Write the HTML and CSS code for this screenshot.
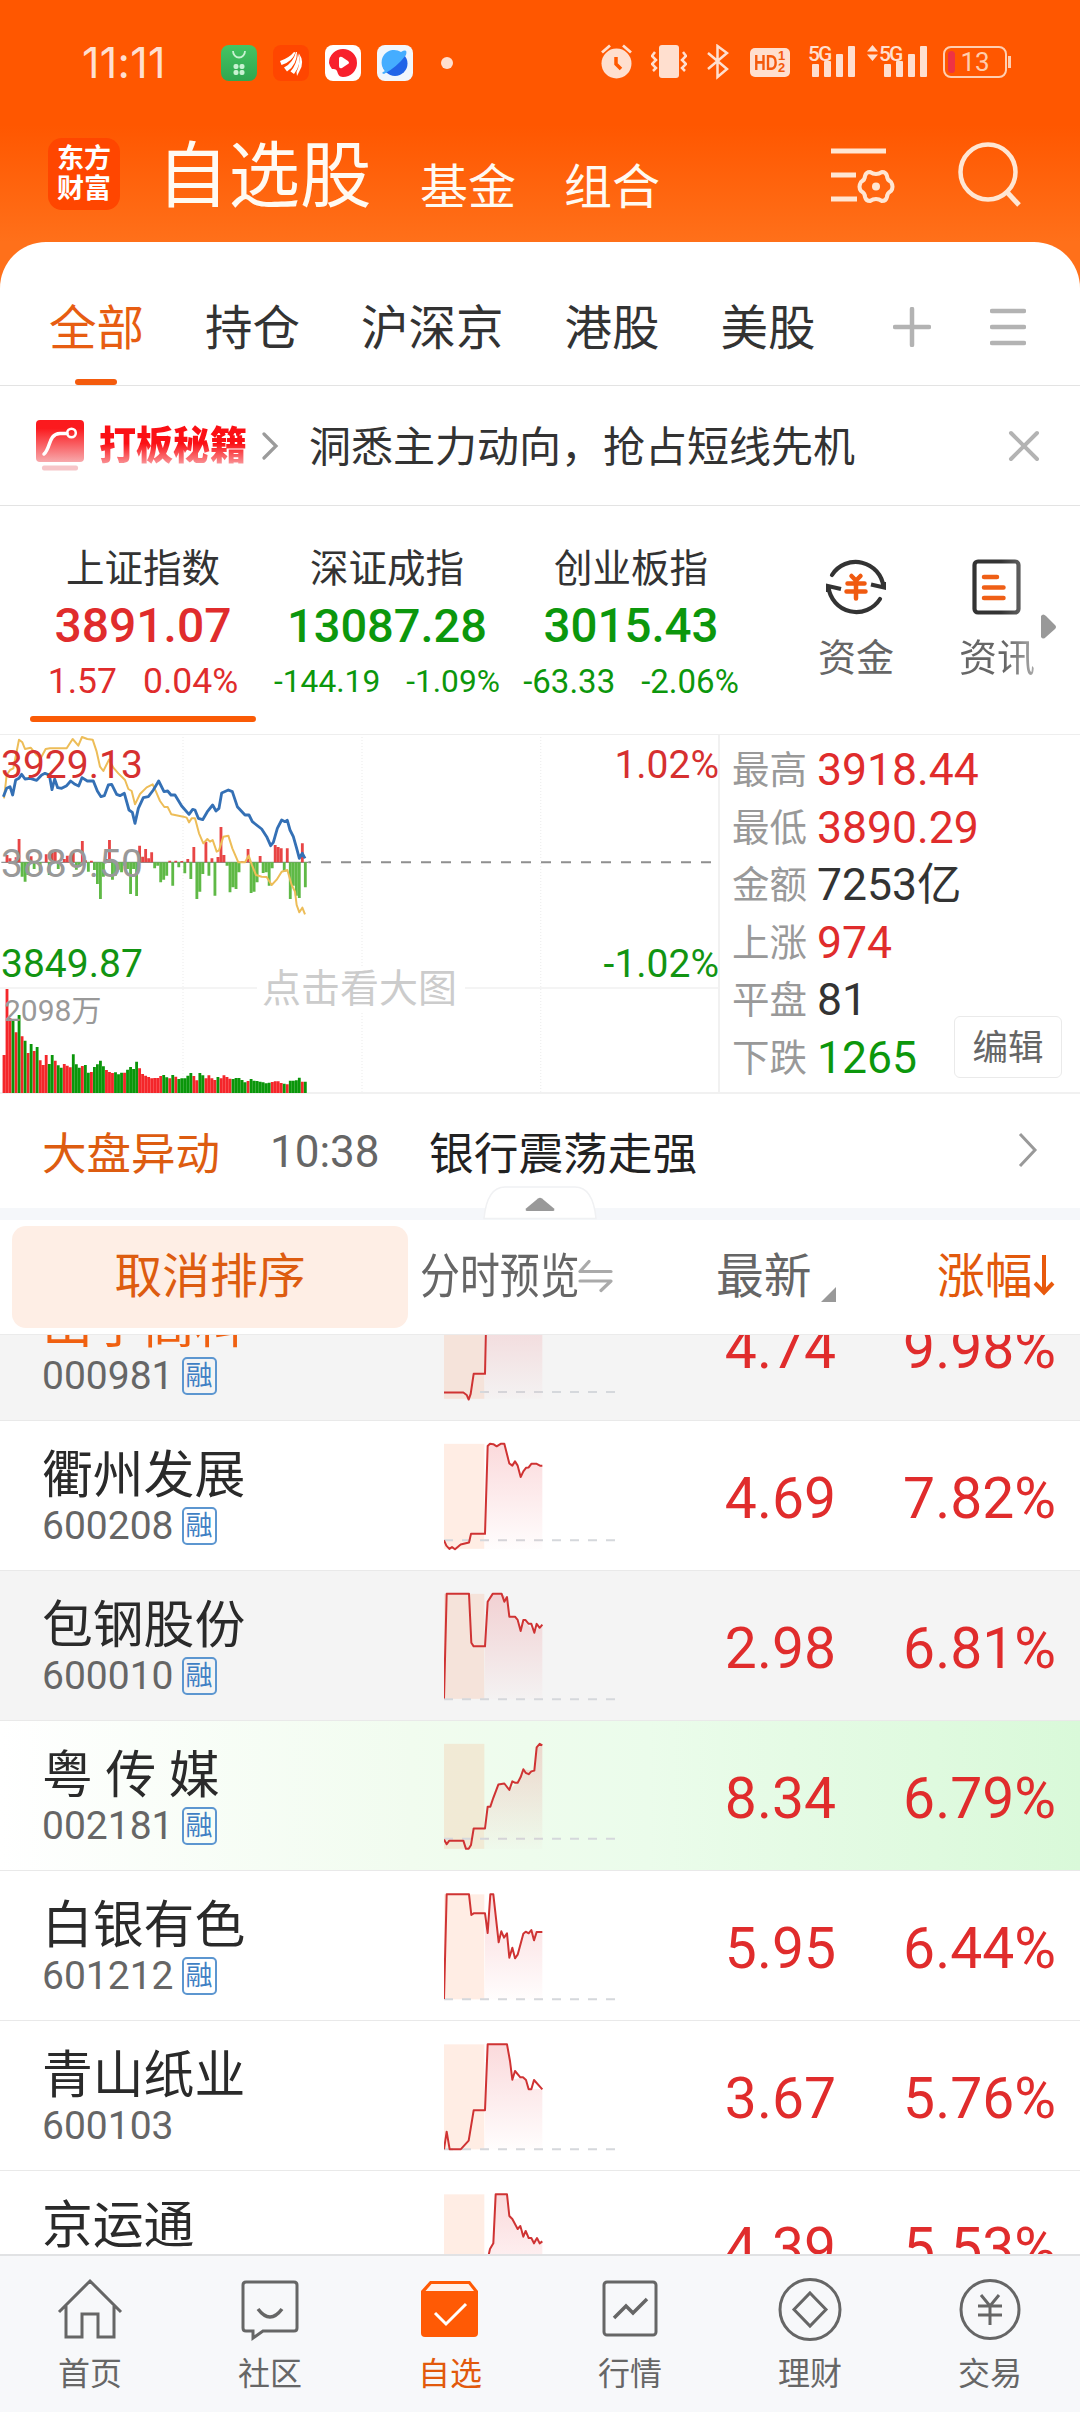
FILE: index.html
```html
<!DOCTYPE html>
<html lang="zh-CN">
<head>
<meta charset="utf-8">
<title>自选股</title>
<link rel="stylesheet" href="styles.css">
</head>
<body>
<div class="app">
  <header class="top">
    <div class="status">
      <span class="clock">11:11</span>
      <div class="notes">
        <svg width="36" height="36" viewBox="0 0 36 36"><defs><linearGradient id="gg" x2="0" y2="1"><stop stop-color="#44c463"/><stop offset="1" stop-color="#2fa650"/></linearGradient></defs><rect width="36" height="36" rx="8" fill="url(#gg)"/><path d="M12 6a6 6.500 0 0 0 12 0" fill="none" stroke="#c8f2d2" stroke-width="1.800"/><g fill="#c8f2d2"><rect x="12.500" y="19" width="5" height="5" rx="2"/><rect x="18.500" y="19" width="5" height="5" rx="2"/><rect x="12.500" y="25" width="5" height="5" rx="2"/><rect x="18.500" y="25" width="5" height="5" rx="2"/></g></svg>
        <svg width="36" height="36" viewBox="0 0 36 36"><rect width="36" height="36" rx="8" fill="#ff4600"/><g fill="#fff"><path d="M7 16Q16 13 21 7L22.500 7.500Q19 17 8.500 20Z"/><path d="M11 22.500Q20 18 23 7L24 7Q24 20 14 26.500Z"/><path d="M17.500 26.500Q24 19 25 8Q29 19 21 29Z"/><path d="M23.500 27Q27.500 19 26 8.500Q32 17 26.500 26L24 31Z"/></g></svg>
        <svg width="36" height="36" viewBox="0 0 36 36"><rect width="36" height="36" rx="8" fill="#fff"/><path d="M4 18a14 14 0 1 1 14 14c-4 0-5-3-6-6-1-2-3-2-5-2a14 14 0 0 1-3-6Z" fill="#f8202c"/><path d="M14 13q1-2 3-1l6 4q2 2 0 3l-6 4q-3 1-3-2Z" fill="#fff"/></svg>
        <svg width="36" height="36" viewBox="0 0 36 36"><rect width="36" height="36" rx="8" fill="#f1f6fc"/><circle cx="18" cy="18.500" r="12.500" fill="#2164e8"/><path d="M7 29Q3 28 8 26A12.500 12.500 0 0 1 24 7Q31 3 29 10Q20 22 7 29Z" fill="#45adff"/></svg>
        <i class="dot"></i>
      </div>
      <div class="system">
        <svg width="31" height="36" viewBox="0 0 31 36"><g fill="none" stroke="#ffdfcf" stroke-width="2.800"><path d="M1 8.500 9 1.500M22 1.500 30 8.500"/></g><circle cx="15.500" cy="19.500" r="15" fill="#ffdfcf"/><path d="M15 13v7l5 5" stroke="#ff5800" stroke-width="3.500" fill="none"/></svg>
        <svg width="36" height="36" viewBox="0 0 36 36"><rect x="8" y="1" width="20" height="33" rx="3" fill="#ffdfcf"/><path d="m4 8-3 4 4 4-4 4 4 4-3 3M32 8l3 4-4 4 4 4-4 4 3 3" fill="none" stroke="#ffdfcf" stroke-width="2.500"/></svg>
        <svg width="22" height="36" viewBox="0 0 22 36"><path d="M1 9 20 25 10.500 33V2L20 9 1 25" fill="none" stroke="#ffdfcf" stroke-width="2.500"/></svg>
        <span class="hd"><em>HD</em><sup>1<br>2</sup></span>
        <span class="signal"><b>5G</b><svg width="43" height="33" viewBox="0 0 43 33"><g fill="#ffdfcf"><rect y="19" width="7" height="13" rx="1"/><rect x="12" y="16" width="7" height="16" rx="1"/><rect x="24" y="9" width="7" height="23" rx="1"/><rect x="36" y="1" width="7" height="31" rx="1"/></g></svg></span>
        <span class="signal second"><svg class="updown" width="11" height="16" viewBox="0 0 11 16"><path d="M0 6.500 5.500 0 11 6.500ZM0 9.500H11L5.500 16Z" fill="#ffdfcf"/></svg><b>5G</b><svg width="43" height="33" viewBox="0 0 43 33"><g fill="#ffdfcf"><rect y="19" width="7" height="13" rx="1"/><rect x="12" y="16" width="7" height="16" rx="1"/><rect x="24" y="9" width="7" height="23" rx="1"/><rect x="36" y="1" width="7" height="31" rx="1"/></g></svg></span>
        <span class="battery"><i></i>13</span>
      </div>
    </div>
    <nav class="title">
      <span class="logo">东方<br>财富</span>
      <h1>自选股</h1>
      <span class="alt">基金</span>
      <span class="alt last">组合</span>
      <svg class="settings" width="64" height="60" viewBox="0 0 64 60"><g fill="none" stroke="#ffe6d3" stroke-width="5"><path d="M0 6H55M0 30H25M0 54H26"/><path stroke-width="4" stroke-linejoin="round" d="M39 27q6 4 12 0 4 0 5 4 0 4 4 6 3 5 0 9-4 2-4 6-1 4-5 4-6-4-12 0-4 0-5-4 0-4-4-6-3-4 0-9 4-2 4-6 1-4 5-4Z"/></g><circle cx="45" cy="41.500" r="4" fill="#ffe6d3"/></svg>
      <svg class="search" width="64" height="66" viewBox="0 0 64 66"><circle cx="30" cy="30" r="27.500" fill="none" stroke="#ffe6d3" stroke-width="4.500"/><path d="M48 49 61 63" stroke="#ffe6d3" stroke-width="5"/></svg>
    </nav>
  </header>

  <main class="sheet">
    <nav class="tabs">
      <span class="on">全部</span><span>持仓</span><span>沪深京</span><span>港股</span><span>美股</span>
      <svg class="plus" width="38" height="40" viewBox="0 0 38 40"><path d="M19 2V38M2 20H36" stroke="#b3b3b3" stroke-width="4.500" stroke-linecap="round"/></svg>
      <svg class="menu" width="36" height="40" viewBox="0 0 36 40"><path d="M2 4H34M2 20H34M2 36H34" stroke="#b3b3b3" stroke-width="4.500" stroke-linecap="round"/></svg>
    </nav>

    <section class="tip">
      <svg width="48" height="51" viewBox="0 0 48 51"><defs><linearGradient id="rr" x2="0" y2="1"><stop offset=".2" stop-color="#fb1a1e"/><stop offset="1" stop-color="#f7a9ac"/></linearGradient></defs><rect width="48" height="42" rx="4" fill="url(#rr)"/><path d="M8 34C15 28 12 14 24 13.500H31" fill="none" stroke="#fff" stroke-width="3.500" stroke-linecap="round"/><circle cx="35.500" cy="13" r="4.300" fill="none" stroke="#fff" stroke-width="2.500"/><rect x="6" y="45.500" width="36" height="5" rx="2" fill="#f6c5c8"/></svg>
      <b>打板秘籍</b>
      <svg class="go" width="17" height="30" viewBox="0 0 17 30"><path d="M2 3 14 15 2 27" fill="none" stroke="#9b9b9b" stroke-width="3.200" stroke-linecap="round"/></svg>
      <span class="msg">洞悉主力动向，抢占短线先机</span>
      <svg class="close" width="32" height="32" viewBox="0 0 32 32"><path d="M3 3 29 29M29 3 3 29" stroke="#b3b3b3" stroke-width="4" stroke-linecap="round"/></svg>
    </section>

    <section class="indices">
      <div class="index up on"><h2>上证指数</h2><strong>3891.07</strong><p><span>1.57</span><span>0.04%</span></p></div>
      <div class="index down b"><h2>深证成指</h2><strong>13087.28</strong><p><span>-144.19</span><span>-1.09%</span></p></div>
      <div class="index down c"><h2>创业板指</h2><strong>3015.43</strong><p><span>-63.33</span><span>-2.06%</span></p></div>
      <div class="tool money">
        <svg width="60" height="62" viewBox="0 0 60 62"><g fill="none" stroke="#333" stroke-width="4.200"><path stroke-linecap="round" d="M6 19A28 28 0 0 1 57.500 31"/><path d="M45 28.500 58 31.500V26"/><path stroke-linecap="round" d="M54 43A28 28 0 0 1 2.500 31"/><path d="M15 33 2 30V36"/></g><path d="M25.500 20 30 24.500 34.500 20M30 25V42.500M21.500 27.500H38.500M20.500 35.500H39.500" fill="none" stroke="#f05a10" stroke-width="4.500" stroke-linecap="round"/></svg>
        <span>资金</span>
      </div>
      <div class="tool news">
        <svg width="50" height="56" viewBox="0 0 50 56"><defs><linearGradient id="fd"><stop offset=".6" stop-color="#333"/><stop offset="1" stop-color="#5c5c5c"/></linearGradient></defs><rect x="2.500" y="2.500" width="44" height="51" rx="3.500" fill="none" stroke="url(#fd)" stroke-width="4.200"/><path d="M12 18H25M12 28.500H31.500M12 39H31.500" stroke="#ef5f16" stroke-width="4.500" stroke-linecap="round"/></svg>
        <span>资讯</span>
      </div>
      <svg class="more" width="16" height="25" viewBox="0 0 16 25"><path d="M0 2Q2-1 5 2L14 11Q16 13 14 15L5 23Q2 26 0 23Z" fill="#999"/></svg>
    </section>

    <section class="market">
      <div class="chart">
        <svg class="plot" width="720" height="360" viewBox="0 27 2160 1080">
          <g stroke="#f0f0f0" stroke-width="4" fill="none"><path d="M0 789H2160"/><path d="M549 36V1100M1086 36V1100M1622 36V1100" stroke-dasharray="3 6" stroke-width="4"/></g>
          <path d="M925 412H2140" stroke="#8f8f8f" stroke-width="6" stroke-dasharray="30 30" stroke-dashoffset="22"/>
          <path d="M4 412H925" stroke="#8f8f8f" stroke-width="4"/>
          <path id="flowUp" class="bars" stroke="#e84545"/><path id="flowDown" class="bars" stroke="#5fb946"/>
          <path id="volUp" class="bars" stroke="#f4262a"/><path id="volDown" class="bars" stroke="#0a960a"/>
          <polyline fill="none" stroke="#edbd58" stroke-width="6" stroke-linejoin="round" points="12,220 20,150 30,135 40,130 48,90 57,44 67,52 75,72 92,68 110,90 122,100 137,72 150,70 200,70 218,42 235,62 246,36 262,42 278,44 290,80 300,125 310,138 327,104 340,128 355,145 375,165 385,192 395,198 405,238 420,207 440,187 458,178 468,200 480,228 493,246 503,246 514,268 550,275 560,278 567,292 575,280 585,280 597,325 610,355 622,342 630,350 638,345 650,380 657,376 670,335 685,332 697,370 715,412 735,412 746,392 755,418 768,450 785,455 800,456 815,480 830,464 845,440 862,435 875,480 885,500 890,540 898,562 907,548 915,568"/>
          <polyline fill="none" stroke="#3470b5" stroke-width="8.500" stroke-linejoin="round" points="10,215 20,190 30,185 38,210 47,165 57,160 65,148 75,162 90,160 110,166 125,150 135,145 148,150 156,194 164,162 173,188 185,190 200,182 212,168 225,178 236,183 246,158 262,168 280,168 292,198 303,215 313,212 325,180 335,178 350,208 360,212 373,205 387,255 397,262 405,295 415,250 430,218 445,215 460,195 476,168 492,200 503,198 513,210 525,210 545,243 567,268 578,253 585,255 595,280 608,284 622,260 638,240 648,258 657,250 665,204 685,195 697,200 712,245 735,270 747,270 757,290 785,312 800,335 812,362 820,352 832,310 845,285 855,290 862,286 870,315 880,335 890,370 898,400 907,385 915,400"/>
        </svg>
        <span class="lab hi">3929.13</span><span class="lab mid">3889.50</span><span class="lab lo">3849.87</span>
        <span class="lab hip">1.02%</span><span class="lab lop">-1.02%</span>
        <span class="lab vol">2098万</span><span class="lab hint">点击看大图</span>
      </div>
      <dl class="stats">
        <dt>最高</dt><dd class="up">3918.44</dd>
        <dt>最低</dt><dd class="up">3890.29</dd>
        <dt>金额</dt><dd>7253亿</dd>
        <dt>上涨</dt><dd class="up">974</dd>
        <dt>平盘</dt><dd>81</dd>
        <dt>下跌</dt><dd class="down">1265</dd>
      </dl>
      <span class="edit">编辑</span>
    </section>

    <section class="event">
      <b>大盘异动</b><time>10:38</time><span>银行震荡走强</span>
      <svg width="20" height="36" viewBox="0 0 20 36"><path d="M2 2 17 18 2 34" fill="none" stroke="#999" stroke-width="3"/></svg>
    </section>
    <div class="band">
      <svg width="114" height="34" viewBox="0 0 114 34"><path d="M1 32.500Q4 1 22 1H92Q110 1 113 32.500Z" fill="#fff" stroke="#f0f1f3" stroke-width="1.500"/><path d="M43 22.500 55 12.500Q57 11 59 12.500L71 22.500Q72 25 70 25H44Q42 25 43 22.500Z" fill="#999"/></svg>
    </div>

    <div class="cols">
      <span class="cancel">取消排序</span>
      <span class="preview"><em>分时预览</em></span>
      <svg class="swap" width="35" height="34" viewBox="0 0 35 34"><path d="M11 2.500 2 12.500H33M2 22H33L23 31.500" fill="none" stroke="#aaa" stroke-width="3.200" stroke-linecap="round" stroke-linejoin="round"/></svg>
      <span class="last">最新</span>
      <svg class="corner" width="15" height="15" viewBox="0 0 15 15"><path d="M15 0V15H0Z" fill="#999"/></svg>
      <span class="rise">涨幅</span>
      <svg class="arrow" width="24" height="42" viewBox="0 0 24 42"><path d="M12 1V38M3 29 12 38.500 21 29" fill="none" stroke="#e8590c" stroke-width="4"/></svg>
    </div>

    <div class="list">
      <svg width="0" height="0" class="defs"><defs><linearGradient id="fill" x2="0" y2="1"><stop stop-color="#e8303a" stop-opacity=".18"/><stop offset="1" stop-color="#e8303a" stop-opacity=".01"/></linearGradient></defs></svg>
      <div class="row gray">
        <div class="name"><h3 class="hot">山子高科</h3><p>000981<i>融</i></p></div>
        <svg class="spark" viewBox="132 -139 516 420" preserveAspectRatio="none"><rect class="pre" x="132" y="-75" width="121" height="294"/><path class="base" d="M240 200H648"/><path class="area" d="M258 -75H427V219H254Z"/><path class="line" d="M132 201H190L200 208 206 221 212 205 221 149H255L260 -75"/></svg>
        <strong>4.74</strong><strong>9.98%</strong>
      </div>
      <div class="row">
        <div class="name"><h3>衢州发展</h3><p>600208<i>融</i></p></div>
        <svg class="spark" viewBox="132 281 516 420" preserveAspectRatio="none"><rect class="pre" x="132" y="345" width="121" height="294"/><path class="base" d="M132 615H648"/><path class="area" d="M255 597 263 350 272 345 290 352 313 345 328 402 345 395 362 438 378 412 395 401 427 406V640H255Z"/><path class="line" d="M132 615 139 630 148 639 156 634 165 640 182 627 207 621 213 597H255L263 351 270 345 280 346 290 352 302 345H313L328 400 337 406 345 394 353 406 362 438 370 422 378 412 386 411 394 401H410L420 406H427"/></svg>
        <strong>4.69</strong><strong>7.82%</strong>
      </div>
      <div class="row gray">
        <div class="name"><h3>包钢股份</h3><p>600010<i>融</i></p></div>
        <svg class="spark" viewBox="132 701 516 420" preserveAspectRatio="none"><rect class="pre" x="132" y="765" width="121" height="294"/><path class="base" d="M132 1060H648"/><path class="area" d="M255 912 263 787 278 765H305L320 775 328 829H345L362 868 370 838 403 872 427 851V1060H255Z"/><path class="line" d="M132 1058 140 765H207L214 902 221 912H255L263 787 278 765H305L313 787 321 774 328 829H345L353 838 362 869 370 838H376L386 849H394L403 874 410 849 419 860 427 851"/></svg>
        <strong>2.98</strong><strong>6.81%</strong>
      </div>
      <div class="row flash">
        <div class="name"><h3>粤 传 媒</h3><p>002181<i>融</i></p></div>
        <svg class="spark" viewBox="132 1121 516 420" preserveAspectRatio="none"><rect class="pre" x="132" y="1185" width="121" height="294"/><path class="base" d="M132 1451H648"/><path class="area" d="M255 1422 263 1361 295 1300 313 1296 328 1313 353 1294 370 1256 403 1260 410 1195 427 1189V1480H255Z"/><path class="line" d="M132 1453 140 1466 148 1456H190L198 1479H206L213 1468 221 1422H255L263 1361H271L280 1336 295 1299 313 1296 328 1314 337 1290 346 1294H353L362 1278 370 1256 377 1266 386 1270 394 1262 403 1260 410 1195 419 1185 427 1189"/></svg>
        <strong>8.34</strong><strong>6.79%</strong>
      </div>
      <div class="row">
        <div class="name"><h3>白银有色</h3><p>601212<i>融</i></p></div>
        <svg class="spark" viewBox="132 30 516 450" preserveAspectRatio="none"><rect class="pre" x="132" y="100" width="121" height="315"/><path class="base" d="M132 415H648"/><path class="area" d="M255 157 263 216 270 100H280L295 244 320 218 328 290 345 292 370 217 394 207 427 213V415H255Z"/><path class="line" d="M132 414 140 100H207L214 162 221 157H255L263 216 271 100H280L296 244 304 211 312 230 321 217 328 290 337 260 345 292 353 281 370 218 377 212 386 217 394 207 402 238 410 213H427"/></svg>
        <strong>5.95</strong><strong>6.44%</strong>
      </div>
      <div class="row">
        <div class="name"><h3>青山纸业</h3><p>600103</p></div>
        <svg class="spark" viewBox="132 480 516 450" preserveAspectRatio="none"><rect class="pre" x="132" y="550" width="121" height="315"/><path class="base" d="M132 865H648"/><path class="area" d="M255 748 263 550H321L337 656 370 649 387 685 427 684V865H255Z"/><path class="line" d="M132 865 140 812 149 865H182L206 839 221 748H255L263 550H321L330 600 337 656 345 630 361 649H369L378 657 386 685H394L402 657 427 685"/></svg>
        <strong>3.67</strong><strong>5.76%</strong>
      </div>
      <div class="row">
        <div class="name"><h3>京运通</h3></div>
        <svg class="spark" viewBox="132 930 516 450" preserveAspectRatio="none"><rect class="pre" x="132" y="1000" width="121" height="315"/><path class="area" d="M265 1190 280 1147 287 1000H321L328 1065 370 1125 427 1142V1315H255Z"/><path class="line" d="M262 1200 270 1164 280 1147 287 1000H321L328 1065 337 1074 353 1104 361 1095 370 1127 377 1110 386 1131H394L402 1147 411 1131 419 1147 427 1141"/></svg>
        <strong>4.39</strong><strong>5.53%</strong>
      </div>
    </div>
  </main>

  <footer class="dock">
    <a><svg width="66" height="66" viewBox="0 0 66 66"><path d="M2 36 33 5 64 36M9 30V61H25V38H41V61H57V30" fill="none" stroke="#666" stroke-width="3"/></svg>首页</a>
    <a><svg width="66" height="66" viewBox="0 0 66 66"><path d="M9 6H57Q60 6 60 9V52Q60 55 57 55H26L16 62V55H9Q6 55 6 52V9Q6 6 9 6Z" fill="none" stroke="#666" stroke-width="3"/><path d="M21 33Q33 49 45 33" fill="none" stroke="#666" stroke-width="3.500"/></svg>社区</a>
    <a class="on"><svg width="66" height="66" viewBox="0 0 66 66"><path d="M13 5H53L61 15V57Q61 61 57 61H8Q4 61 4 57V15Z" fill="#ff5a05"/><path d="M14.500 8H51.500L57 15H8.500Z" fill="#fff1ea"/><path d="M18 37 29 48 49 28" fill="none" stroke="#fff" stroke-width="3"/></svg>自选</a>
    <a><svg width="66" height="66" viewBox="0 0 66 66"><rect x="7" y="6" width="52" height="53" rx="3" fill="none" stroke="#666" stroke-width="3"/><path d="M17 42 29 30 36 37 50 23" fill="none" stroke="#666" stroke-width="3.500"/></svg>行情</a>
    <a><svg width="66" height="66" viewBox="0 0 66 66"><circle cx="33" cy="33.500" r="30" fill="none" stroke="#666" stroke-width="3"/><path d="M33 17 49 33.500 33 50 17 33.500Z" fill="none" stroke="#666" stroke-width="3"/></svg>理财</a>
    <a><svg width="66" height="66" viewBox="0 0 66 66"><circle cx="33" cy="33.500" r="29" fill="none" stroke="#666" stroke-width="3"/><path d="M24 19 33 30 42 19M33 30V49M21 30H45M21 39H45" fill="none" stroke="#666" stroke-width="3"/></svg>交易</a>
  </footer>
</div>
<script src="chart.js"></script>
</body>
</html>
```
FILE: chart.js
```js
// Bars of the intraday chart: one slot per minute group, 9.04 units apart.
const volume = "990R 792R 880R 888G 922R 870G 934R 947G 984R 957G 978R 966G 1006R 1020R 990R 1017G 990G 1007R 1021G 1028G 1017R 1022R 1027R 988G 1018G 1028G 1023R 1020G 1043G 1041R 1026G 1018G 1007G 1024G 1035R 1041R 1044R 1042G 1048G 1043G 1043R 1034G 1026G 1032G 1010G 1030R 1047R 1052R 1056R 1060R 1059R 1059R 1053R 1050G 1057G 1060R 1050G 1055R 1062G 1060G 1060G 1052G 1044G 1053R 1066R 1044G 1051G 1060R 1051R 1060R 1065R 1056G 1060R 1051R 1056R 1061R 1062G 1059G 1059G 1065G 1072G 1068R 1062G 1067G 1068G 1070G 1072G 1075G 1073G 1071R 1069R 1069R 1074R 1076G 1078R 1067G 1067G 1066G 1058G 1070R 1070G".split(" ");
const flow = [0,22,12,0,15,70,-43,-58,-38,18,-20,0,-25,0,24,-38,30,35,-20,0,10,20,20,28,-22,-14,64,6,-28,5,-23,-65,-110,-43,10,67,-52,-40,-22,-30,-10,-20,-95,-20,-101,50,17,40,12,30,-18,-10,-60,-52,-40,5,-70,5,-15,4,-33,10,-50,46,-110,-88,-35,62,-40,12,-100,16,106,22,-10,-90,-75,-80,-30,3,2,40,-92,-88,-60,19,-32,-30,-70,-18,52,46,42,-28,42,-110,-70,-100,-107,57,-75];
const paths = { flowUp: "", flowDown: "", volUp: "", volDown: "" };
volume.forEach((v, i) => {
  const x = (12 + i * 9.04).toFixed(1);
  paths[v.endsWith("R") ? "volUp" : "volDown"] += `M${x} 1104V${parseInt(v)}`;
});
flow.forEach((v, i) => {
  const x = (12 + i * 9.04).toFixed(1);
  if (v) paths[v > 0 ? "flowUp" : "flowDown"] += `M${x} 412V${412 - v}`;
});
for (const id in paths) document.getElementById(id).setAttribute("d", paths[id]);
```
FILE: styles.css
```css
* { box-sizing: border-box; margin: 0; padding: 0; }
body { width: 1080px; height: 2412px; overflow: hidden; background: #fff; color: #333; font-family: Roboto, "Noto Sans CJK SC", sans-serif; font-weight: 400; }
svg { display: block; flex: none; }
h1, h2, h3 { font-weight: 400; }
i, em { font-style: normal; }
span, strong, h1, h2, h3, b { white-space: nowrap; }
.up { color: #e02c2c; }
.down { color: #0c970c; }
.app { display: flex; flex-direction: column; height: 2412px; }

.top { height: 290px; flex: none; margin-bottom: -48px; background: linear-gradient(#ff5700 0, #ff5700 125px, #ff701a 242px); }
.status { height: 125px; display: flex; padding: 44px 73px 0 82px; color: #ffdfcf; }
.clock { width: 139px; font: 400 43px/37px Inter, sans-serif; letter-spacing: 0.3px; }
.notes { display: flex; gap: 16px; height: 36px; margin-top: 1px; align-items: center; }
.dot { width: 12px; height: 12px; margin-left: 12px; border-radius: 50%; background: #ffdfcf; }
.system { display: flex; margin-left: auto; height: 36px; align-items: center; }
.system > :nth-child(2) { margin-left: 19px; }
.system > :nth-child(3) { margin-left: 20px; }
.hd { display: flex; align-items: center; width: 40px; height: 29px; margin-left: 21px; padding-left: 4px; border-radius: 5px; background: #ffdfcf; color: #f4590c; font: bold 22px/29px "Liberation Sans", sans-serif; }
.hd em { width: 24px; transform: scaleX(.74); transform-origin: 0 50%; }
.hd sup { font-size: 13px; line-height: 12px; }
.signal { position: relative; width: 46px; height: 36px; margin-left: 19px; padding: 1px 0 0 3px; }
.signal b { position: absolute; left: -1px; top: 1px; font: 500 21px/18px Roboto, sans-serif; letter-spacing: -2px; }
.signal.second { width: 60px; margin-left: 12px; padding-left: 17px; }
.signal.second b { left: 12px; }
.updown { position: absolute; left: 0; top: 1px; }
.battery { position: relative; width: 64px; height: 32px; margin-left: 16px; border: 2px solid #ffcfb2; border-radius: 8px; text-align: center; font-size: 26px; line-height: 29px; color: #ffcdad; }
.battery i { position: absolute; left: 3px; top: 3px; width: 7px; height: 22px; border-radius: 4px; background: #ee3344; }
.battery::after { content: ""; position: absolute; right: -6px; top: 8px; width: 3px; height: 12px; background: #ffcfb2; }

.title { display: flex; align-items: flex-start; height: 117px; padding-left: 48px; color: #fffaf2; }
.logo { width: 72px; height: 72px; margin-top: 13px; padding-top: 6px; border-radius: 14px; background: #ff4600; text-align: center; font-weight: 700; font-size: 27px; line-height: 30px; color: #fff; }
.title h1 { width: 258px; padding-left: 37px; font-size: 71.500px; line-height: 104px; font-weight: 400; }
.alt { width: 144px; padding-left: 42px; font-size: 48px; line-height: 125px; }
.alt.last { padding-left: 42px; width: 309px; }
.settings { margin-top: 20px; }
.search { margin: 17px 0 0 63px; }

.sheet { flex: 1; min-height: 0; display: flex; flex-direction: column; background: #fff; border-radius: 46px 46px 0 0; }
.tabs { height: 144px; flex: none; display: flex; align-items: center; padding: 30px 0 0 49px; border-bottom: 1px solid #e3e3e3; font-size: 47.500px; gap: 61px; }
.tabs span { line-height: 60px; }
.tabs .on { position: relative; color: #e75d12; }
.tabs .on::after { content: ""; position: absolute; left: 26px; bottom: -26px; width: 42px; height: 6px; border-radius: 3px; background: #f45b0d; }
.plus { margin-left: 16px; margin-top: -4px; }
.menu { margin-left: -2px; margin-top: -4px; }
.tip { height: 120px; flex: none; display: flex; align-items: center; padding-left: 36px; border-bottom: 1px solid #e3e3e3; }
.tip b { width: 162px; margin-left: 15px; font-weight: 900; font-size: 37px; line-height: 48px; transform: scaleY(1.06); background: linear-gradient(#fb1015 45%, #f9a3a6 90%); background-clip: text; color: transparent; }
.msg { margin: -4px 0 0 30px; font-size: 42px; }
.go { margin-left: 1px; }
.close { margin-left: 153px; }

.indices { height: 228px; flex: none; display: flex; padding-left: 30px; position: relative; }
.index { width: 226px; padding-top: 35px; text-align: center; position: relative; }
.index.b { width: 240px; margin-left: 11px; }
.index.c { width: 230px; margin-left: 9px; }
.index h2 { font-size: 38.500px; line-height: 56px; color: #333; }
.index strong { display: block; font-weight: 500; font-size: 48px; line-height: 57px; }
.index.b strong { font-size: 47px; }
.index.c strong { font-size: 47.500px; line-height: 58px; }
.index p { display: flex; justify-content: center; gap: 26px; font-size: 35.500px; line-height: 44px; margin-top: 5px; }
.index.b p { font-size: 31.700px; line-height: 46px; }
.index.c p { font-size: 33px; line-height: 45px; margin-top: 4px; }
.index.on::after { content: ""; position: absolute; left: 0; right: 0; top: 210px; height: 6px; border-radius: 3px; background: #fa5b06; }
.tool { width: 80px; display: flex; flex-direction: column; align-items: center; font-size: 38px; line-height: 44px; color: #666; }
.tool svg { height: 62px; margin: 50px 0 18px; }
.money { margin-left: 70px; }
.news { margin-left: 61px; }
.news span { background: linear-gradient(90deg, #666 60%, #aaa); background-clip: text; color: transparent; }
.more { margin: 108px 0 0 4px; }

.market { position: relative; height: 360px; flex: none; display: flex; border-top: 1px solid #eee; border-bottom: 2px solid #f1f1f1; }
.chart { position: relative; width: 720px; flex: none; border-right: 2px solid #f1f1f1; }
.plot { margin-top: -1px; }
.bars { fill: none; stroke-width: 8.500; }
.lab { position: absolute; font-size: 39px; line-height: 44px; }
.hi, .mid, .lo { left: 1px; }
.hi, .hip { top: 8px; color: #d63030; }
.mid { top: 107px; color: #999; }
.lo, .lop { top: 207px; color: #129412; }
.hip, .lop { right: -1px; }
.vol { left: 4px; top: 254px; font-size: 30px; color: #999; }
.hint { left: 257px; top: 232px; padding: 0 8px 0 5px; background: #fff; font-size: 39px; color: #ccc; }
.stats { display: grid; grid-template-columns: 85px auto; align-content: start; padding: 7px 0 0 12px; }
.stats dt { font-size: 37.500px; line-height: 57.600px; color: #999; }
.stats dd { font-size: 44.500px; line-height: 57.600px; white-space: nowrap; }
.edit { position: absolute; left: 954px; top: 281px; width: 108px; height: 62px; border: 1px solid #eaeaea; border-radius: 6px; text-align: center; font-size: 35.500px; line-height: 63px; color: #666; }

.event { height: 114px; flex: none; display: flex; align-items: center; padding: 0 0 0 42px; font-size: 44.700px; }
.event b { width: 228px; font-weight: 400; font-size: 44.500px; margin-top: -2px; color: #dd5c10; }
.event time { width: 159px; font-size: 44px; margin-top: 2px; color: #666; }
.event span { width: 589px; margin-top: -2px; color: #222; }
.event svg { margin-top: -3px; }
.band { height: 12px; flex: none; display: flex; justify-content: center; background: #f5f7fa; position: relative; }
.band svg { position: relative; margin-top: -22px; }

.cols { height: 115px; flex: none; display: flex; align-items: center; padding-left: 12px; border-bottom: 1px solid #ebebeb; font-size: 47.800px; color: #666; }
.cols span { line-height: 103px; height: 102px; margin-top: 0; }
.cols .cancel { width: 396px; border-radius: 14px; background: #feeee5; color: #dd5c10; text-align: center; }
.preview { width: 170px; padding-left: 12px; }
.preview em { display: inline-block; transform: scaleX(.835); transform-origin: 0 50%; }
.swap { margin-top: -2px; }
.cols .last { width: 96px; margin-left: 103px; }
.corner { margin: 34px 0 0 9px; }
.rise { margin-left: 101px; width: 96px; color: #e2590c; }
.arrow { margin: -5px 0 0 -1px; }

.list { flex: 1; min-height: 0; overflow: hidden; }
.defs { height: 0; }
.row { height: 150px; display: grid; grid-template-columns: 444px 172px 220px 220px; border-bottom: 1px solid #e9e9e9; }
.row:nth-child(2) { margin-top: -64px; }
.gray { background: #f4f4f4; }
.flash { background: linear-gradient(90deg, #fff 0, #f1fcef 38%, #ebfceb 60%, #d9f9d9 100%); }
.name { padding: 19px 0 0 42px; }
.name h3 { font-size: 50.800px; line-height: 71px; color: #2a2a2a; }
.name .hot { color: #f06010; }
.name p { display: flex; align-items: center; height: 38px; margin-top: -4px; font-size: 39px; line-height: 30px; color: #666; }
.name i { width: 35px; height: 38px; margin-left: 8px; border: 2px solid #5c96d0; border-radius: 5px; font-size: 27px; line-height: 34px; text-align: center; color: #3f7fc4; }
.row strong { font-weight: 400; font-size: 57px; line-height: 156px; height: 149px; text-align: right; color: #e02c2c; }
.spark { width: 172px; height: 150px; }
.pre { fill: #ff6a20; fill-opacity: .12; }
.area { fill: url(#fill); }
.base { fill: none; stroke: #d5d8dc; stroke-width: 2px; stroke-dasharray: 9 9; vector-effect: non-scaling-stroke; }
.line { fill: none; stroke: #cf3333; stroke-width: 2px; stroke-linejoin: round; vector-effect: non-scaling-stroke; }

.dock { height: 158px; flex: none; display: grid; grid-template-columns: repeat(6, 180px); background: #f7f8fa; border-top: 2px solid #e1e2e4; }
.dock a { display: flex; flex-direction: column; align-items: center; padding-top: 20px; font-size: 32px; line-height: 40px; color: #666; gap: 12px; }
.dock .on { color: #e2590c; }
```
